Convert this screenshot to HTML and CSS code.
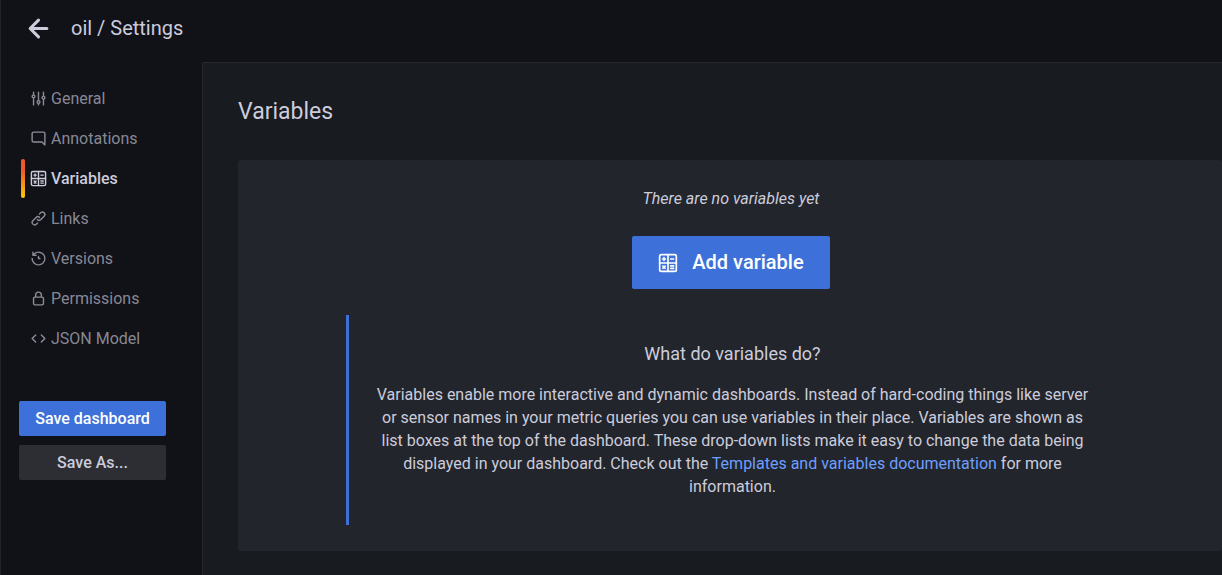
FILE: index.html
```html
<!DOCTYPE html>
<html lang="en">
<head>
<meta charset="utf-8">
<title>oil / Settings</title>
<link rel="stylesheet" href="styles.css">
</head>
<body>
<svg class="sprite" aria-hidden="true">
  <symbol id="calculator" viewBox="0 0 24 24">
    <g fill="none" stroke="currentColor" stroke-width="2" stroke-linecap="round" stroke-linejoin="round">
      <rect x="2" y="2" width="20" height="20" rx="2"/>
      <path d="M12 2v20M2 12h20M5.500 7.200h3.400M7.200 5.500v3.400M15.300 7.200h3.400M5.900 15.700l2.600 2.600M8.500 15.700l-2.600 2.600M15.300 15.500h3.400M15.300 18.500h3.400"/>
    </g>
  </symbol>
</svg>
<div class="page">
  <header class="page-header">
    <button class="back" type="button" aria-label="Go back">
      <svg class="icon-back" viewBox="0 0 24 24"><path d="M20 12H4.500M12 4L4 12l8 8" fill="none" stroke="currentColor" stroke-width="3" stroke-linecap="round" stroke-linejoin="round"/></svg>
    </button>
    <h1 class="page-title">oil / Settings</h1>
  </header>
  <div class="layout">
    <aside class="sidebar">
      <nav class="nav">
        <a class="nav-item" href="#general"><svg class="icon" viewBox="0 0 24 24"><path d="M20,8.180V3a1,1,0,0,0-2,0V8.180a3,3,0,0,0,0,5.640V21a1,1,0,0,0,2,0V13.820a3,3,0,0,0,0-5.640ZM19,12a1,1,0,1,1,1-1A1,1,0,0,1,19,12Zm-6,2.180V3a1,1,0,0,0-2,0V14.180a3,3,0,0,0,0,5.640V21a1,1,0,0,0,2,0V19.820a3,3,0,0,0,0-5.640ZM12,18a1,1,0,1,1,1-1A1,1,0,0,1,12,18ZM6,6.180V3A1,1,0,0,0,4,3V6.180a3,3,0,0,0,0,5.640V21a1,1,0,0,0,2,0V11.820A3,3,0,0,0,6,6.180ZM5,10A1,1,0,1,1,6,9,1,1,0,0,1,5,10Z"/></svg>General</a>
        <a class="nav-item" href="#annotations"><svg class="icon" viewBox="0 0 24 24"><path d="M19,2H5A3,3,0,0,0,2,5V15a3,3,0,0,0,3,3H16.590l3.700,3.710A1,1,0,0,0,21,22a.84.84,0,0,0,.38-.08A1,1,0,0,0,22,21V5A3,3,0,0,0,19,2Zm1,16.590-2.290-2.300A1,1,0,0,0,17,16H5a1,1,0,0,1-1-1V5A1,1,0,0,1,5,4H19a1,1,0,0,1,1,1Z"/></svg>Annotations</a>
        <a class="nav-item active" href="#variables" aria-current="page"><svg class="icon"><use href="#calculator"/></svg>Variables</a>
        <a class="nav-item" href="#links"><svg class="icon" viewBox="0 0 24 24"><path d="M10,17.550,8.230,19.270a2.470,2.470,0,0,1-3.500-3.500l4.540-4.550a2.460,2.460,0,0,1,3.390-.09l.12.1a1,1,0,0,0,1.400-1.430A2.750,2.750,0,0,0,14,9.590a4.460,4.460,0,0,0-6.090.22L3.310,14.360a4.480,4.480,0,0,0,6.330,6.330L11.370,19A1,1,0,0,0,10,17.550ZM20.690,3.310a4.490,4.490,0,0,0-6.330,0L12.630,5A1,1,0,0,0,14,6.450l1.730-1.720a2.470,2.470,0,0,1,3.500,3.500l-4.540,4.550a2.460,2.460,0,0,1-3.390.09l-.12-.1a1,1,0,0,0-1.400,1.430,2.750,2.750,0,0,0,.23.21,4.470,4.470,0,0,0,6.090-.22l4.550-4.550A4.490,4.490,0,0,0,20.690,3.310Z"/></svg>Links</a>
        <a class="nav-item" href="#versions"><svg class="icon" viewBox="0 0 24 24"><path d="M12,2A10,10,0,0,0,5.120,4.770V3a1,1,0,0,0-2,0V7.500a1,1,0,0,0,1,1H8.620a1,1,0,0,0,0-2H6.220A8,8,0,1,1,4,12a1,1,0,0,0-2,0A10,10,0,1,0,12,2Zm0,6a1,1,0,0,0-1,1v3a1,1,0,0,0,1,1h2a1,1,0,0,0,0-2H13V9A1,1,0,0,0,12,8Z"/></svg>Versions</a>
        <a class="nav-item" href="#permissions"><svg class="icon" viewBox="0 0 24 24"><path d="M17,9V7A5,5,0,0,0,7,7V9a3,3,0,0,0-3,3v7a3,3,0,0,0,3,3H17a3,3,0,0,0,3-3V12A3,3,0,0,0,17,9ZM9,7a3,3,0,0,1,6,0V9H9Zm9,12a1,1,0,0,1-1,1H7a1,1,0,0,1-1-1V12a1,1,0,0,1,1-1H17a1,1,0,0,1,1,1Z"/></svg>Permissions</a>
        <a class="nav-item" href="#json"><svg class="icon" viewBox="0 0 24 24"><path d="M8 7l-5 5 5 5M16 7l5 5-5 5" fill="none" stroke="currentColor" stroke-width="2" stroke-linecap="round" stroke-linejoin="round"/></svg>JSON Model</a>
      </nav>
      <div class="actions">
        <button class="btn btn-primary" type="button">Save dashboard</button>
        <button class="btn btn-secondary" type="button">Save As...</button>
      </div>
    </aside>
    <main class="content">
      <h2 class="section-title">Variables</h2>
      <section class="card">
        <p class="empty">There are no variables yet</p>
        <button class="btn-large btn-primary" type="button"><svg class="icon-large"><use href="#calculator"/></svg>Add variable</button>
        <div class="info">
          <h3 class="info-title">What do variables do?</h3>
          <p class="info-text">Variables enable more interactive and dynamic dashboards. Instead of hard-coding things like server or sensor names in your metric queries you can use variables in their place. Variables are shown as list boxes at the top of the dashboard. These drop-down lists make it easy to change the data being displayed in your dashboard. Check out the <a class="link" href="#docs">Templates and variables documentation</a> for more information.</p>
        </div>
      </section>
    </main>
  </div>
</div>
</body>
</html>
```
FILE: styles.css
```css
* { box-sizing: border-box; }
body {
  margin: 0;
  background: #111217;
  color: #ccccdc;
  font: 16px/23px Roboto, sans-serif;
}
h1, h2, h3, p { margin: 0; font-weight: 400; }
button { border: 0; font: inherit; cursor: pointer; }
a { text-decoration: none; }
.sprite { display: none; }
.page {
  display: flex;
  flex-direction: column;
  min-height: 100vh;
  border-left: 1px solid #222327;
}
.page-header {
  display: flex;
  align-items: center;
  gap: 20px;
  height: 62px;
  padding: 0 25px 6px;
}
.back { display: flex; padding: 0; background: none; color: #ccccdc; }
.icon-back { width: 25px; height: 25px; }
.page-title { font-size: 20px; line-height: 24px; }
.layout { display: flex; flex: 1; }
.sidebar { flex: 0 0 201px; padding: 16px 36px 16px 18px; }
.nav { display: flex; flex-direction: column; }
.nav-item {
  display: flex;
  align-items: center;
  gap: 4px;
  height: 40px;
  padding-left: 11px;
  color: rgba(204, 204, 220, 0.65);
}
.icon { width: 17px; height: 17px; fill: currentColor; }
.active { position: relative; color: #ccccdc; font-weight: 500; }
.active::before {
  content: "";
  position: absolute;
  left: 2px;
  top: 1px;
  bottom: 0;
  width: 4px;
  border-radius: 2px;
  background: linear-gradient(#f05a28 30%, #fbca0a 99%);
}
.actions { display: flex; flex-direction: column; gap: 9px; margin-top: 43px; }
.btn { height: 35px; padding: 0; border-radius: 2px; font-weight: 500; }
.btn-primary { background: #3d71d9; color: #fff; }
.btn-secondary { background: #2d2e34; color: #ccccdc; }
.content {
  flex: 1;
  min-width: 0;
  padding: 36px 0 24px 35px;
  border: solid #25272c;
  border-width: 1px 0 0 1px;
  border-radius: 2px 0 0 0;
  background: #181b1f;
}
.section-title { font-size: 23px; line-height: 26px; }
.card {
  display: flex;
  flex-direction: column;
  align-items: center;
  margin-top: 35px;
  padding: 27px 24px 26px 26px;
  border-radius: 3px;
  background: #22252b;
}
.empty { font-style: italic; }
.btn-large {
  display: flex;
  align-items: center;
  gap: 14px;
  height: 53px;
  margin-top: 26px;
  padding: 0 26px;
  border-radius: 2px;
  font-size: 20px;
  font-weight: 500;
}
.icon-large { width: 20px; height: 20px; }
.info {
  max-width: 770px;
  margin-top: 26px;
  padding: 26px 24px 27px;
  border-left: 3px solid #3d71d9;
  text-align: center;
}
.info-title { margin-bottom: 16px; font-size: 18px; line-height: 26px; }
.link { color: #6e9fff; }
```
